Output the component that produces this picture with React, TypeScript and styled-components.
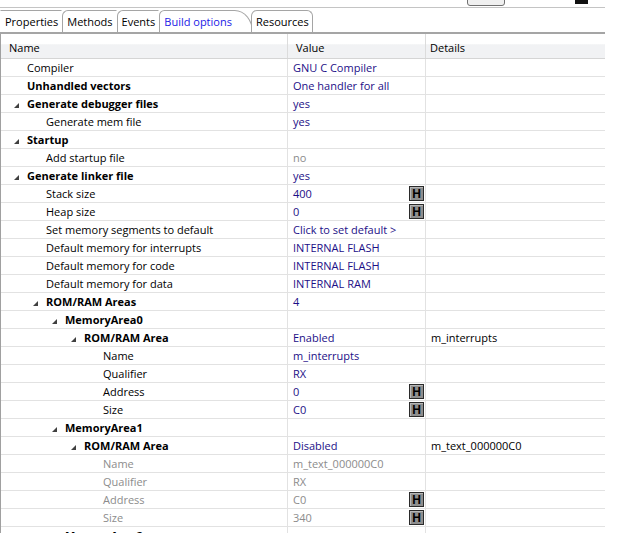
import React from "react";
import styled, { createGlobalStyle } from "styled-components";

const GlobalStyle = createGlobalStyle`
  html, body {
    margin: 0;
    padding: 0;
    background: #ffffff;
    overflow: hidden;
  }
  body {
    font-family: "Open Sans", "Noto Sans", sans-serif;
    font-size: 11px;
    color: #000000;
  }
`;

const Panel = styled.div`
  width: 605px;
  height: 533px;
  overflow: hidden;
`;

const TopBar = styled.div`
  height: 7px;
  border-bottom: 1px solid #c4c4c4;
  position: relative;
  overflow: hidden;
`;

const ComboStub = styled.div`
  position: absolute;
  left: 467px;
  top: -8px;
  width: 36px;
  height: 12px;
  border: 1px solid #707070;
  border-radius: 3px;
  background: #f0f0f0;
`;

const BlackStub = styled.div`
  position: absolute;
  left: 575px;
  top: 0;
  width: 13px;
  height: 4px;
  background: #111111;
`;

const TabStrip = styled.div`
  display: flex;
  align-items: flex-end;
  height: 23px;
  padding-top: 1px;
  border-bottom: 2px solid #a5a5a5;
`;

const Tab = styled.div<{ $active?: boolean; $first?: boolean }>`
  height: 21px;
  display: flex;
  align-items: center;
  padding: 0 ${(p) => (p.$active ? "20px" : "3px")} 0 4px;
  border: 1px solid #a5a5a5;
  border-bottom: none;
  border-left-color: ${(p) => (p.$first ? "transparent" : "#a5a5a5")};
  border-right-color: ${(p) => (p.$active ? "#a5a5a5" : "transparent")};
  border-top-left-radius: ${(p) => (p.$first ? "0" : "6px")};
  border-top-right-radius: ${(p) => (p.$active ? "20px 24px" : "0")};
  color: ${(p) => (p.$active ? "#1a1ae6" : "#000000")};
  background: #ffffff;
  white-space: nowrap;

  &:last-child {
    border-right-color: #a5a5a5;
    border-top-right-radius: 6px;
    margin-left: -2px;
  }
`;

const Table = styled.div`
  border-left: 1px solid #a0a0a0;
`;

const Grid = styled.div`
  display: grid;
  grid-template-columns: 287px 138px 1fr;
`;

const HeaderRow = styled(Grid)`
  height: 24px;
  background: linear-gradient(#ffffff 0%, #ffffff 40%, #f1f2f4 45%, #f1f2f4 100%);
  border-bottom: 1px solid #d5d5d5;
`;

const HeaderCell = styled.div<{ $last?: boolean }>`
  display: flex;
  align-items: center;
  padding-left: ${(p) => (p.$last ? "4px" : "8px")};
  border-right: 1px solid ${(p) => (p.$last ? "transparent" : "#dcdcdc")};
  padding-top: 2px;
`;

const Row = styled(Grid)`
  height: 17px;
  border-bottom: 1px solid #e2e2e2;
`;

const NameCell = styled.div<{ $level: number; $bold?: boolean; $disabled?: boolean }>`
  position: relative;
  display: flex;
  align-items: center;
  padding-left: ${(p) => 26 + p.$level * 19}px;
  border-right: 1px solid #e2e2e2;
  font-weight: ${(p) => (p.$bold ? 700 : 400)};
  color: ${(p) => (p.$disabled ? "#8c8c8c" : "#000000")};
  white-space: nowrap;
`;

const Expander = styled.svg<{ $level: number }>`
  position: absolute;
  left: ${(p) => 13 + p.$level * 19}px;
  top: 8px;
  width: 5px;
  height: 5px;
`;

const ValueCell = styled.div<{ $tone: "link" | "grey" }>`
  display: flex;
  align-items: center;
  justify-content: space-between;
  padding-left: 5px;
  padding-right: 1px;
  border-right: 1px solid #e2e2e2;
  color: ${(p) => (p.$tone === "grey" ? "#8c8c8c" : "#1c0f87")};
  white-space: nowrap;
`;

const DetailsCell = styled.div`
  display: flex;
  align-items: center;
  padding-left: 5px;
  white-space: nowrap;
`;

const HButton = styled.div`
  width: 15px;
  height: 15px;
  box-sizing: border-box;
  border: 1px solid #2a2a2a;
  background: #8e8e8e;
  box-shadow: inset 1px 1px 0 #b8b8b8;
  display: flex;
  align-items: center;
  justify-content: center;
  font-family: "Liberation Sans", Arial, sans-serif;
  font-weight: 700;
  font-size: 12px;
  color: #000000;
`;

type Item = {
  label: string;
  level: number;
  bold?: boolean;
  open?: boolean;
  value?: string;
  details?: string;
  disabled?: boolean;
  greyValue?: boolean;
  h?: boolean;
};

const items: Item[] = [
  { label: "Compiler", level: 0, value: "GNU C Compiler" },
  { label: "Unhandled vectors", level: 0, bold: true, value: "One handler for all" },
  { label: "Generate debugger files", level: 0, bold: true, open: true, value: "yes" },
  { label: "Generate mem file", level: 1, value: "yes" },
  { label: "Startup", level: 0, bold: true, open: true },
  { label: "Add startup file", level: 1, value: "no", greyValue: true },
  { label: "Generate linker file", level: 0, bold: true, open: true, value: "yes" },
  { label: "Stack size", level: 1, value: "400", h: true },
  { label: "Heap size", level: 1, value: "0", h: true },
  { label: "Set memory segments to default", level: 1, value: "Click to set default >" },
  { label: "Default memory for interrupts", level: 1, value: "INTERNAL FLASH" },
  { label: "Default memory for code", level: 1, value: "INTERNAL FLASH" },
  { label: "Default memory for data", level: 1, value: "INTERNAL RAM" },
  { label: "ROM/RAM Areas", level: 1, bold: true, open: true, value: "4" },
  { label: "MemoryArea0", level: 2, bold: true, open: true },
  { label: "ROM/RAM Area", level: 3, bold: true, open: true, value: "Enabled", details: "m_interrupts" },
  { label: "Name", level: 4, value: "m_interrupts" },
  { label: "Qualifier", level: 4, value: "RX" },
  { label: "Address", level: 4, value: "0", h: true },
  { label: "Size", level: 4, value: "C0", h: true },
  { label: "MemoryArea1", level: 2, bold: true, open: true },
  { label: "ROM/RAM Area", level: 3, bold: true, open: true, value: "Disabled", details: "m_text_000000C0" },
  { label: "Name", level: 4, disabled: true, value: "m_text_000000C0" },
  { label: "Qualifier", level: 4, disabled: true, value: "RX" },
  { label: "Address", level: 4, disabled: true, value: "C0", h: true },
  { label: "Size", level: 4, disabled: true, value: "340", h: true },
  { label: "MemoryArea2", level: 2, bold: true, open: true },
];

const tabs = ["Properties", "Methods", "Events", "Build options", "Resources"];

export default function App() {
  return (
    <Panel>
      <GlobalStyle />
      <TopBar>
        <ComboStub />
        <BlackStub />
      </TopBar>
      <TabStrip>
        {tabs.map((t, i) => (
          <Tab key={t} $first={i === 0} $active={t === "Build options"}>
            {t}
          </Tab>
        ))}
      </TabStrip>
      <Table>
        <HeaderRow>
          <HeaderCell>Name</HeaderCell>
          <HeaderCell>Value</HeaderCell>
          <HeaderCell $last>Details</HeaderCell>
        </HeaderRow>
        {items.map((it, i) => (
          <Row key={i}>
            <NameCell $level={it.level} $bold={it.bold} $disabled={it.disabled}>
              {it.open && (
                <Expander $level={it.level} viewBox="0 0 5 5">
                  <polygon points="5,0 5,5 0,5" fill="#404040" />
                </Expander>
              )}
              {it.label}
            </NameCell>
            <ValueCell $tone={it.disabled || it.greyValue ? "grey" : "link"}>
              <span>{it.value}</span>
              {it.h && <HButton>H</HButton>}
            </ValueCell>
            <DetailsCell>{it.details}</DetailsCell>
          </Row>
        ))}
      </Table>
    </Panel>
  );
}
